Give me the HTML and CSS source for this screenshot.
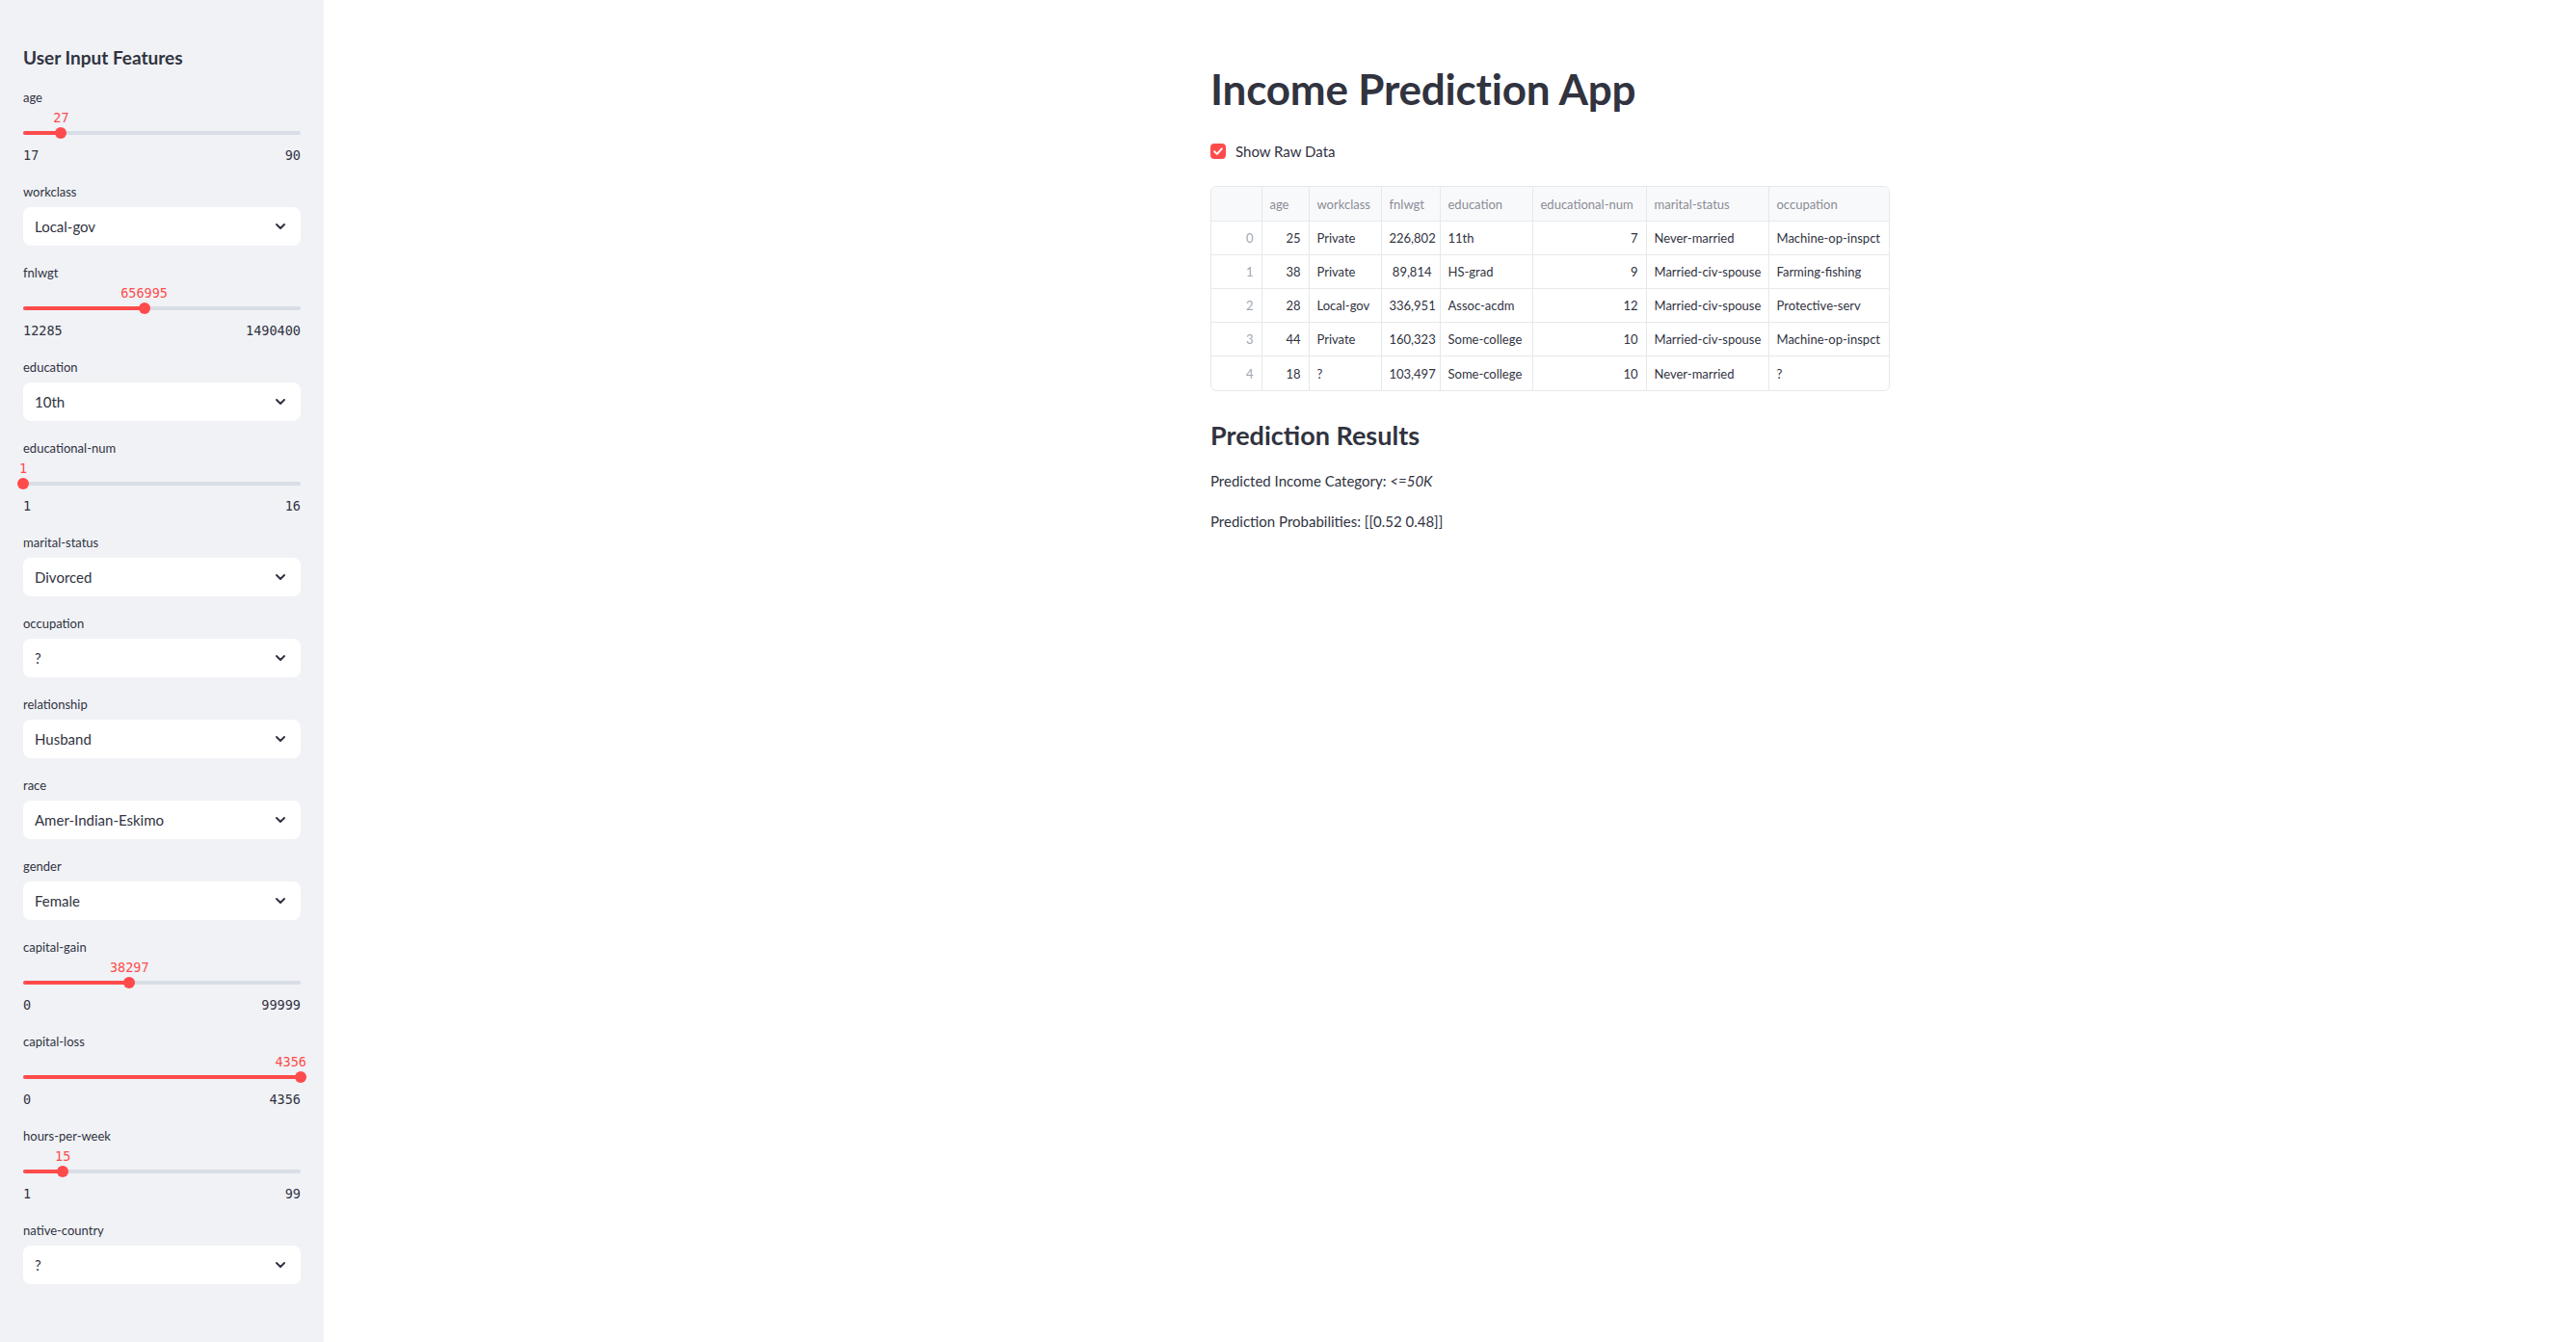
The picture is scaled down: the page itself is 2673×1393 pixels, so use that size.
FILE: index.html
```html
<!DOCTYPE html>
<html lang="en">
<head>
<meta charset="utf-8">
<title>Income Prediction App</title>
<link rel="stylesheet" href="styles.css">
</head>
<body>
<div class="app">
  <aside class="sidebar">
    <h2 class="side-title">User Input Features</h2>
    <div class="widgets">
      <div class="slider">
        <div class="w-label">age</div>
        <div class="slider-body">
          <span class="thumb-value" style="left: 13.70%">27</span>
          <div class="track"><div class="fill" style="width: 13.70%"></div><div class="thumb" style="left: 13.70%"></div></div>
        </div>
        <div class="ticks"><span>17</span><span>90</span></div>
      </div>

      <div class="select">
        <div class="w-label">workclass</div>
        <div class="select-box"><span>Local-gov</span><svg class="chev" viewBox="0 0 10 6"><path d="M1 1 L5 5 L9 1"/></svg></div>
      </div>

      <div class="slider">
        <div class="w-label">fnlwgt</div>
        <div class="slider-body">
          <span class="thumb-value" style="left: 43.62%">656995</span>
          <div class="track"><div class="fill" style="width: 43.62%"></div><div class="thumb" style="left: 43.62%"></div></div>
        </div>
        <div class="ticks"><span>12285</span><span>1490400</span></div>
      </div>

      <div class="select">
        <div class="w-label">education</div>
        <div class="select-box"><span>10th</span><svg class="chev" viewBox="0 0 10 6"><path d="M1 1 L5 5 L9 1"/></svg></div>
      </div>

      <div class="slider">
        <div class="w-label">educational-num</div>
        <div class="slider-body">
          <span class="thumb-value" style="left: 0%">1</span>
          <div class="track"><div class="fill" style="width: 0%"></div><div class="thumb" style="left: 0%"></div></div>
        </div>
        <div class="ticks"><span>1</span><span>16</span></div>
      </div>

      <div class="select">
        <div class="w-label">marital-status</div>
        <div class="select-box"><span>Divorced</span><svg class="chev" viewBox="0 0 10 6"><path d="M1 1 L5 5 L9 1"/></svg></div>
      </div>

      <div class="select">
        <div class="w-label">occupation</div>
        <div class="select-box"><span>?</span><svg class="chev" viewBox="0 0 10 6"><path d="M1 1 L5 5 L9 1"/></svg></div>
      </div>

      <div class="select">
        <div class="w-label">relationship</div>
        <div class="select-box"><span>Husband</span><svg class="chev" viewBox="0 0 10 6"><path d="M1 1 L5 5 L9 1"/></svg></div>
      </div>

      <div class="select">
        <div class="w-label">race</div>
        <div class="select-box"><span>Amer-Indian-Eskimo</span><svg class="chev" viewBox="0 0 10 6"><path d="M1 1 L5 5 L9 1"/></svg></div>
      </div>

      <div class="select">
        <div class="w-label">gender</div>
        <div class="select-box"><span>Female</span><svg class="chev" viewBox="0 0 10 6"><path d="M1 1 L5 5 L9 1"/></svg></div>
      </div>

      <div class="slider">
        <div class="w-label">capital-gain</div>
        <div class="slider-body">
          <span class="thumb-value" style="left: 38.30%">38297</span>
          <div class="track"><div class="fill" style="width: 38.30%"></div><div class="thumb" style="left: 38.30%"></div></div>
        </div>
        <div class="ticks"><span>0</span><span>99999</span></div>
      </div>

      <div class="slider">
        <div class="w-label">capital-loss</div>
        <div class="slider-body">
          <span class="thumb-value at-end" style="left: 100%">4356</span>
          <div class="track"><div class="fill" style="width: 100%"></div><div class="thumb" style="left: 100%"></div></div>
        </div>
        <div class="ticks"><span>0</span><span>4356</span></div>
      </div>

      <div class="slider">
        <div class="w-label">hours-per-week</div>
        <div class="slider-body">
          <span class="thumb-value" style="left: 14.29%">15</span>
          <div class="track"><div class="fill" style="width: 14.29%"></div><div class="thumb" style="left: 14.29%"></div></div>
        </div>
        <div class="ticks"><span>1</span><span>99</span></div>
      </div>

      <div class="select">
        <div class="w-label">native-country</div>
        <div class="select-box"><span>?</span><svg class="chev" viewBox="0 0 10 6"><path d="M1 1 L5 5 L9 1"/></svg></div>
      </div>
    </div>
  </aside>

  <main class="main">
    <div class="block">
      <h1 class="title">Income Prediction App</h1>

      <label class="checkbox">
        <span class="check"><svg viewBox="0 0 16 16"><path d="M4.2 8.3 L6.9 10.9 L11.8 5.4"/></svg></span>
        <span>Show Raw Data</span>
      </label>

      <div class="grid-wrap">
        <table class="grid">
          <colgroup>
            <col class="w-idx"><col class="w-age"><col class="w-work"><col class="w-fnl"><col class="w-edu"><col class="w-enum"><col class="w-mar"><col class="w-occ">
          </colgroup>
          <thead>
            <tr><th></th><th>age</th><th>workclass</th><th>fnlwgt</th><th>education</th><th>educational-num</th><th>marital-status</th><th>occupation</th></tr>
          </thead>
          <tbody>
            <tr><td class="idx">0</td><td class="num">25</td><td>Private</td><td class="num">226,802</td><td>11th</td><td class="num">7</td><td>Never-married</td><td>Machine-op-inspct</td></tr>
            <tr><td class="idx">1</td><td class="num">38</td><td>Private</td><td class="num">89,814</td><td>HS-grad</td><td class="num">9</td><td>Married-civ-spouse</td><td>Farming-fishing</td></tr>
            <tr><td class="idx">2</td><td class="num">28</td><td>Local-gov</td><td class="num">336,951</td><td>Assoc-acdm</td><td class="num">12</td><td>Married-civ-spouse</td><td>Protective-serv</td></tr>
            <tr><td class="idx">3</td><td class="num">44</td><td>Private</td><td class="num">160,323</td><td>Some-college</td><td class="num">10</td><td>Married-civ-spouse</td><td>Machine-op-inspct</td></tr>
            <tr><td class="idx">4</td><td class="num">18</td><td>?</td><td class="num">103,497</td><td>Some-college</td><td class="num">10</td><td>Never-married</td><td>?</td></tr>
          </tbody>
        </table>
      </div>

      <h3 class="subtitle">Prediction Results</h3>
      <p class="para">Predicted Income Category: <em>&lt;=50K</em></p>
      <p class="para">Prediction Probabilities: [[0.52 0.48]]</p>
    </div>
  </main>
</div>
</body>
</html>
```

FILE: styles.css
```css
* { box-sizing: border-box; }

html, body {
  margin: 0;
  padding: 0;
  height: 100%;
}

body {
  font-family: Lato, "Noto Sans", "Liberation Sans", sans-serif;
  color: #31333F;
  background: #ffffff;
}

.app {
  display: flex;
  min-height: 1393px;
}

/* ---------- Sidebar ---------- */
.sidebar {
  width: 336px;
  flex: 0 0 336px;
  background: #F0F2F6;
  padding: 48px 24px 40px;
}

.side-title {
  margin: 0 0 17px;
  font-size: 19px;
  line-height: 24px;
  font-weight: 700;
  color: #31333F;
}

.widgets {
  display: flex;
  flex-direction: column;
  gap: 16px;
}

.w-label {
  height: 24px;
  font-size: 13px;
  line-height: 25px;
  color: #31333F;
  white-space: nowrap;
}

/* slider */
.slider {
  height: 82px;
  display: flex;
  flex-direction: column;
}

.slider-body {
  position: relative;
  height: 38px;
}

.thumb-value {
  position: absolute;
  top: 0;
  transform: translateX(-50%);
  font-family: "DejaVu Sans Mono", "Liberation Mono", monospace;
  font-size: 13.5px;
  line-height: 18px;
  color: #FF4B4B;
  white-space: nowrap;
}

.thumb-value.at-end {
  transform: translateX(calc(-100% + 6px));
}

.track {
  position: absolute;
  left: 0;
  right: 0;
  top: 23px;
  height: 4px;
  border-radius: 2px;
  background: #D9DDE6;
}

.fill {
  height: 4px;
  border-radius: 2px;
  background: #FF4B4B;
}

.thumb {
  position: absolute;
  top: -4px;
  width: 12px;
  height: 12px;
  margin-left: -6px;
  border-radius: 50%;
  background: #FF4B4B;
}

.ticks {
  height: 20px;
  display: flex;
  justify-content: space-between;
  font-family: "DejaVu Sans Mono", "Liberation Mono", monospace;
  font-size: 13.5px;
  line-height: 20px;
  color: #31333F;
}

/* select */
.select {
  display: flex;
  flex-direction: column;
}

.select .w-label {
  margin-bottom: 4px;
}

.select-box {
  height: 40px;
  background: #ffffff;
  border-radius: 8px;
  display: flex;
  align-items: center;
  justify-content: space-between;
  padding: 0 16px 0 12px;
  font-size: 15px;
  color: #31333F;
}

.chev {
  width: 10px;
  height: 6px;
  overflow: visible;
  fill: none;
  stroke: #31333F;
  stroke-width: 2;
  stroke-linecap: round;
  stroke-linejoin: round;
}

/* ---------- Main ---------- */
.main {
  flex: 1 1 auto;
  padding-left: 920px;
}

.block {
  width: 704px;
  padding-top: 66px;
}

.title {
  margin: 0;
  font-size: 44px;
  line-height: 1.2;
  font-weight: 700;
  color: #31333F;
  letter-spacing: -0.2px;
}

.checkbox {
  display: flex;
  align-items: center;
  gap: 10px;
  height: 24px;
  margin-top: 26px;
  font-size: 15px;
  color: #31333F;
}

.check {
  width: 16px;
  height: 16px;
  border-radius: 4px;
  background: #FF4B4B;
  display: flex;
}

.check svg {
  width: 16px;
  height: 16px;
  fill: none;
  stroke: #ffffff;
  stroke-width: 2;
  stroke-linecap: round;
  stroke-linejoin: round;
}

.grid-wrap {
  margin-top: 24px;
  width: 705px;
  border: 1px solid #E6E8EC;
  border-radius: 6px;
  overflow: hidden;
}

.grid {
  width: 703px;
  table-layout: fixed;
  border-collapse: collapse;
  font-size: 13px;
}

.w-idx { width: 52px; }
.w-age { width: 49px; }
.w-work { width: 75px; }
.w-fnl { width: 61px; }
.w-edu { width: 96px; }
.w-enum { width: 118px; }
.w-mar { width: 127px; }
.w-occ { width: 125px; }

.grid th,
.grid td {
  padding: 0 8px;
  border-right: 1px solid #E6E8EC;
  border-bottom: 1px solid #E6E8EC;
  white-space: nowrap;
  overflow: hidden;
  text-align: left;
}

.grid th:last-child,
.grid td:last-child {
  border-right: none;
}

.grid tbody tr:last-child td {
  border-bottom: none;
}

.grid th {
  height: 36px;
  background: #F8F9FB;
  font-weight: 400;
  color: #8A8C96;
}

.grid td {
  height: 35px;
  color: #31333F;
}

.grid td.num {
  text-align: right;
}

.grid td.idx {
  text-align: right;
  color: #A3A6AF;
}

.subtitle {
  margin: 29px 0 0;
  font-size: 27px;
  line-height: 34px;
  font-weight: 700;
  color: #31333F;
}

.para {
  margin: 18px 0 0;
  font-size: 15px;
  line-height: 25.6px;
  color: #31333F;
}

.para em {
  font-style: italic;
}

.para + .para {
  margin-top: 16.6px;
}
```
